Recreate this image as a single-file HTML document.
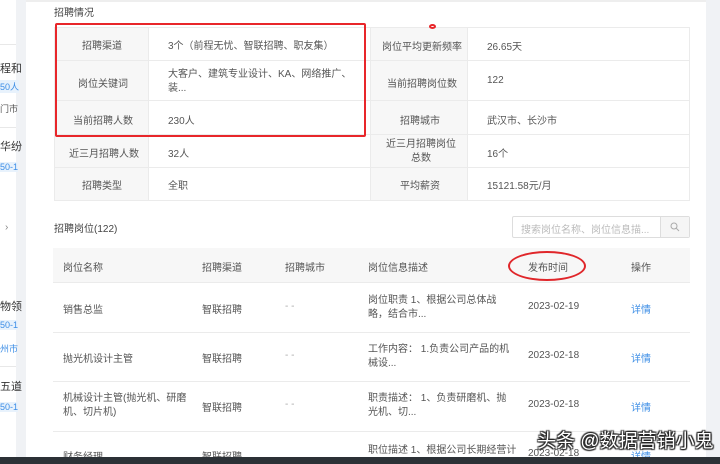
<!DOCTYPE html>
<html><head><meta charset="utf-8"><style>
*{margin:0;padding:0;box-sizing:border-box}
body{width:720px;height:464px;overflow:hidden;background:#f0f2f5;font-family:"Liberation Sans","Noto Sans CJK SC",sans-serif;font-size:10px;color:#555;position:relative}
.a{position:absolute}
.side{left:0;top:0;width:16px;height:464px;background:#fff}
.card{left:26px;top:0;width:680px;height:464px;background:#fff}
.t{position:absolute;white-space:nowrap}
.lab{background:#f7f7f7}
.cell{position:absolute;display:flex;align-items:center;border-bottom:1px solid #ebebeb;line-height:14px}
.blue{color:#3d8ee6}
</style></head><body>
<div class="a side"></div>
<div class="a" style="left:0;top:44px;width:16px;height:1px;background:#e8e8e8"></div>
<div class="t" style="left:0;top:60px;font-size:11px;color:#333">程和</div>
<div class="t" style="left:0;top:80px;font-size:9px;color:#3d8ee6;background:#e8f2fc">50人</div>
<div class="t" style="left:0;top:102px;font-size:9px">门市</div>
<div class="a" style="left:0;top:127px;width:16px;height:1px;background:#e8e8e8"></div>
<div class="t" style="left:0;top:138px;font-size:11px;color:#333">华纷</div>
<div class="t" style="left:0;top:162px;font-size:9px;color:#3d8ee6;background:#e8f2fc">50-1</div>
<div class="t" style="left:5px;top:222px;font-size:10px;color:#888">›</div>
<div class="t" style="left:0;top:298px;font-size:11px;color:#333">物领</div>
<div class="t" style="left:0;top:320px;font-size:9px;color:#3d8ee6;background:#e8f2fc">50-1</div>
<div class="t" style="left:0;top:342px;font-size:9px;color:#3d8ee6">州市</div>
<div class="a" style="left:0;top:366px;width:16px;height:1px;background:#e8e8e8"></div>
<div class="t" style="left:0;top:378px;font-size:11px;color:#333">五道</div>
<div class="t" style="left:0;top:402px;font-size:9px;color:#3d8ee6;background:#e8f2fc">50-1</div>
<div class="a card"></div>
<div class="a" style="left:26px;top:0;width:680px;height:2px;background:#eee"></div>
<div class="t" style="left:54px;top:4px;font-size:10px;color:#444">招聘情况</div>

<!-- info table -->
<div class="a" style="left:54px;top:27px;width:636px;height:173px;border:1px solid #ebebeb;border-bottom:none"></div>
<div class="a lab" style="left:55px;top:28px;width:93px;height:172px"></div>
<div class="a lab" style="left:371px;top:28px;width:96px;height:172px"></div>
<div class="a" style="left:148px;top:28px;width:1px;height:172px;background:#ebebeb"></div>
<div class="a" style="left:370px;top:28px;width:1px;height:172px;background:#ebebeb"></div>
<div class="a" style="left:467px;top:28px;width:1px;height:172px;background:#ebebeb"></div>
<div class="cell" style="left:54px;top:28px;width:636px;height:33px"></div>
<div class="cell" style="left:54px;top:61px;width:636px;height:40px"></div>
<div class="cell" style="left:54px;top:101px;width:636px;height:34px"></div>
<div class="cell" style="left:54px;top:135px;width:636px;height:33px"></div>
<div class="cell" style="left:54px;top:168px;width:636px;height:33px"></div>
<div class="t" style="left:82px;top:37px">招聘渠道</div>
<div class="t" style="left:168px;top:37px">3个（前程无忧、智联招聘、职友集）</div>
<div class="t" style="left:78px;top:75px">岗位关键词</div>
<div class="t" style="left:168px;top:68px;line-height:14px">大客户、建筑专业设计、KA、网络推广、<br>装...</div>
<div class="t" style="left:73px;top:112px">当前招聘人数</div>
<div class="t" style="left:168px;top:112px">230人</div>
<div class="t" style="left:69px;top:145px">近三月招聘人数</div>
<div class="t" style="left:168px;top:145px">32人</div>
<div class="t" style="left:82px;top:177px">招聘类型</div>
<div class="t" style="left:168px;top:177px">全职</div>
<div class="t" style="left:382px;top:38px">岗位平均更新频率</div>
<div class="t" style="left:487px;top:38px">26.65天</div>
<div class="t" style="left:387px;top:75px">当前招聘岗位数</div>
<div class="t" style="left:487px;top:75px">122</div>
<div class="t" style="left:400px;top:112px">招聘城市</div>
<div class="t" style="left:487px;top:112px">武汉市、长沙市</div>
<div class="t" style="left:382px;top:138px;text-align:center;width:78px;line-height:14px;white-space:normal">近三月招聘岗位总数</div>
<div class="t" style="left:487px;top:145px">16个</div>
<div class="t" style="left:400px;top:177px">平均薪资</div>
<div class="t" style="left:487px;top:177px">15121.58元/月</div>
<div class="a" style="left:55px;top:23px;width:311px;height:114px;border:2px solid #e8262a;border-radius:2px"></div>
<div class="a" style="left:429px;top:24px;width:7px;height:5px;border:2px solid #e8262a;border-radius:50%"></div>

<div class="t" style="left:54px;top:220px;color:#444">招聘岗位(122)</div>
<div class="a" style="left:512px;top:216px;width:178px;height:22px;border:1px solid #ddd;border-radius:2px"></div>
<div class="a" style="left:660px;top:217px;width:29px;height:20px;background:#f5f5f5;border-left:1px solid #ddd"></div>
<div class="t" style="left:521px;top:221px;color:#bbb;font-size:10px">搜索岗位名称、岗位信息描...</div>
<svg class="a" style="left:670px;top:222px" width="10" height="10" viewBox="0 0 10 10"><circle cx="4" cy="4" r="3" fill="none" stroke="#aaa" stroke-width="1"/><path d="M6.2 6.2L9 9" stroke="#aaa"/></svg>

<!-- job table -->
<div class="a" style="left:53px;top:248px;width:637px;height:35px;background:#f7f7f7;border-bottom:1px solid #ebebeb"></div>
<div class="t" style="left:63px;top:259px">岗位名称</div>
<div class="t" style="left:202px;top:259px">招聘渠道</div>
<div class="t" style="left:285px;top:259px">招聘城市</div>
<div class="t" style="left:368px;top:259px">岗位信息描述</div>
<div class="t" style="left:528px;top:259px">发布时间</div>
<div class="t" style="left:631px;top:259px">操作</div>
<div class="a" style="left:508px;top:251px;width:78px;height:30px;border:2px solid #e0262a;border-radius:50%"></div>
<div class="a" style="left:53px;top:332px;width:637px;height:1px;background:#ebebeb"></div>
<div class="a" style="left:53px;top:381px;width:637px;height:1px;background:#ebebeb"></div>
<div class="a" style="left:53px;top:431px;width:637px;height:1px;background:#ebebeb"></div>

<div class="t" style="left:63px;top:301px">销售总监</div>
<div class="t" style="left:202px;top:301px">智联招聘</div>
<div class="t" style="left:285px;top:301px;color:#aaa">- -</div>
<div class="t" style="left:368px;top:294px;line-height:14px">岗位职责 1、根据公司总体战<br>略，结合市...</div>
<div class="t" style="left:528px;top:301px">2023-02-19</div>
<div class="t blue" style="left:631px;top:301px">详情</div>

<div class="t" style="left:63px;top:350px">抛光机设计主管</div>
<div class="t" style="left:202px;top:350px">智联招聘</div>
<div class="t" style="left:285px;top:350px;color:#aaa">- -</div>
<div class="t" style="left:368px;top:343px;line-height:14px">工作内容： 1.负责公司产品的机<br>械设...</div>
<div class="t" style="left:528px;top:350px">2023-02-18</div>
<div class="t blue" style="left:631px;top:350px">详情</div>

<div class="t" style="left:63px;top:392px;line-height:14px">机械设计主管(抛光机、研磨<br>机、切片机)</div>
<div class="t" style="left:202px;top:399px">智联招聘</div>
<div class="t" style="left:285px;top:399px;color:#aaa">- -</div>
<div class="t" style="left:368px;top:392px;line-height:14px">职责描述： 1、负责研磨机、抛<br>光机、切...</div>
<div class="t" style="left:528px;top:399px">2023-02-18</div>
<div class="t blue" style="left:631px;top:399px">详情</div>

<div class="t" style="left:63px;top:448px">财务经理</div>
<div class="t" style="left:202px;top:448px">智联招聘</div>
<div class="t" style="left:368px;top:441px">职位描述 1、根据公司长期经营计</div>
<div class="t" style="left:528px;top:448px">2023-02-18</div>
<div class="t blue" style="left:631px;top:448px">详情</div>

<div class="t" style="left:537px;top:426px;font-size:19px;color:#fff;text-shadow:0 0 2px #222,1px 1px 1px #222,-1px -1px 1px #222,1px -1px 1px #222,-1px 1px 1px #222">头条 @数据营销小鬼</div>
<div class="a" style="left:0;top:457px;width:720px;height:7px;background:#2c3136"></div>
</body></html>
